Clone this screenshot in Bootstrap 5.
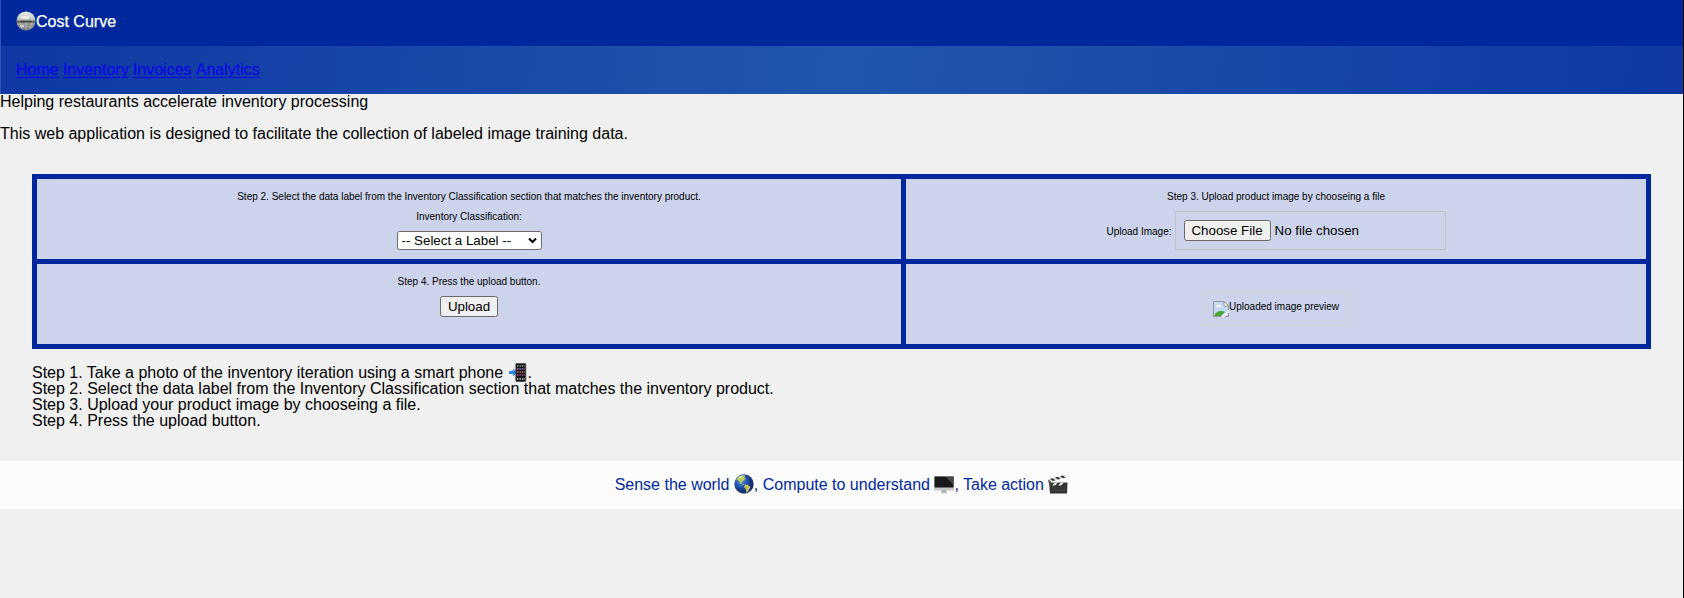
<!DOCTYPE html>
<html lang="en">
<head>
<meta charset="utf-8">
<meta name="viewport" content="width=device-width, initial-scale=1">
<title>Cost Curve</title>
<link href="https://cdn.jsdelivr.net/npm/bootstrap@5.3.0/dist/css/bootstrap.min.css" rel="stylesheet">
<style>
  body { font: 16px/16px "Liberation Sans", Arial, sans-serif; color: #000; background: #f0f0f0; border-right: 1px solid #000; min-height: 598px; }
  .site-head { background: #00289c; color: #fff; height: 46px; padding: 11px 16px 0; line-height: 20px; }
  .site-head span { padding-top: 1px; -webkit-text-stroke: .25px #fff; }
  .site-nav { height: 48px; padding: 16px 16px 0; background: linear-gradient(100deg, #1037a2 0%, #2256ae 50%, #1037a2 100%); gap: 4.2px; }
  .site-head, .site-nav { border-left: 1px solid #3055ae; padding-left: 15px; }
  .site-nav a { color: #00e; text-decoration: underline; text-underline-offset: 2px; text-decoration-thickness: 1px; }
  .page-main { padding: 32px 32px 0; }
  .workflow { display: grid; grid-template-columns: 864px 1fr; grid-template-rows: 80px 80px; gap: 5px; padding: 5px; background: #00289c; height: 175px; }
  .step { background: #ccd3eb; font-size: 10px; line-height: 10px; padding-top: 13px; }
  .class-label { margin-top: 10px; }
  .native { font-size: 13.333px; color: #000; border: 1px solid #6b6b6b; border-radius: 2.5px; background: #efefef; line-height: 15px; white-space: nowrap; }
  .label-select { width: 145px; height: 19px; background: #fff; margin-top: 9px; padding: 0 4px 0 4px; }
  .btn-upload { width: 58px; height: 21px; padding: 2px 0; margin-top: 9px; }
  .file-row { margin-top: 9px; }
  .file-row label { padding-top: 2px; }
  .file-box { width: 271px; height: 39px; border: 1px solid #c2c3c8; padding: 8px; font-size: 13.333px; margin-left: 3px; }
  .btn-choose { width: 87px; height: 21px; padding: 2px 0; text-align: center; margin-right: 4px; }
  .preview { width: 144px; height: 34px; border: 1px solid #d3d5d6; padding: 8px; margin-top: 15px; white-space: nowrap; }
  .preview span { padding-top: 1px; }
  .site-foot { background: #fcfcfc; color: #00289c; height: 48px; margin-top: 32px; }
  .site-foot svg { margin-bottom: 2px; }
  svg { display: block; flex: none; }
</style>
</head>
<body>
<header class="site-head d-flex">
  <svg width="20" height="20" viewBox="0 0 20 20">
    <defs><linearGradient id="mirror" x1="0" y1="0" x2="0" y2="1"><stop offset="0" stop-color="#e9eeee"/><stop offset=".4" stop-color="#bdc2bd"/><stop offset=".52" stop-color="#5e605b"/><stop offset=".66" stop-color="#92928c"/><stop offset="1" stop-color="#777b7d"/></linearGradient></defs>
    <circle cx="10" cy="10" r="9.6" fill="url(#mirror)"/>
    <path d="M2 6h16M1 9h18M1 13h18M3 16h14M10 1v18M6 2q-4 8 0 16M14 2q4 8 0 16" fill="none" stroke="#fff" stroke-width=".6" opacity=".45"/>
    <path d="M6 5h7v3H5zM4 14h4v2H5z" fill="#fff" opacity=".55"/>
    <path d="M4 10.500h12" stroke="#42443f" stroke-width="1.3"/>
  </svg><span>Cost Curve</span>
</header>
<nav class="site-nav d-flex">
  <a href="#">Home</a><a href="#">Inventory</a><a href="#">Invoices</a><a href="#">Analytics</a>
</nav>
<p class="mb-3">Helping restaurants accelerate inventory processing</p>
<p class="mb-0">This web application is designed to facilitate the collection of labeled image training data.</p>

<main class="page-main">
  <div class="workflow">
    <section class="step d-flex flex-column align-items-center">
      <div>Step 2. Select the data label from the Inventory Classification section that matches the inventory product.</div>
      <label class="class-label">Inventory Classification:</label>
      <div class="native label-select d-flex align-items-center justify-content-between">
        <span>-- Select a Label --</span>
        <svg width="9" height="7" viewBox="0 0 9 7"><path d="M1 1.5l3.5 3.5L8 1.5" fill="none" stroke="#000" stroke-width="2"/></svg>
      </div>
    </section>
    <section class="step d-flex flex-column align-items-center">
      <div>Step 3. Upload product image by chooseing a file</div>
      <div class="file-row d-flex align-items-center"><label>Upload Image:</label>
        <div class="file-box d-flex align-items-center"><span class="native btn-choose">Choose File</span><span>No file chosen</span></div>
      </div>
    </section>
    <section class="step d-flex flex-column align-items-center">
      <div>Step 4. Press the upload button.</div>
      <button class="native btn-upload">Upload</button>
    </section>
    <section class="step d-flex flex-column align-items-center">
      <div class="preview d-flex">
        <svg width="16" height="16" viewBox="0 0 16 16">
          <path d="M0 0h11l5 5v5l-6 6H0z" fill="#c4d9f5"/>
          <path d="M3 6q0-2 2-2 3-1 3 2z" fill="#fff"/>
          <path d="M1 15q2-5 7-5 3 0 4 1l-4 4z" fill="#4ba633"/>
          <path d="M.5 16V.5H11L15.500 5v4M0 15.500h9M12 15.500h3.500V12" fill="none" stroke="#969696"/>
          <path d="M11 .5V5h4.500z" fill="#fff" stroke="#969696"/>
          <path d="M8 16l8-7v2l-5 5z" fill="#f4f6fb"/>
        </svg><span>Uploaded image preview</span>
      </div>
    </section>
  </div>
  <div class="instructions mt-3">
    <div class="d-flex"><span>Step 1. Take a photo of the inventory iteration using a smart phone&nbsp;</span>
      <svg width="20" height="16" viewBox="0 0 20 16" overflow="visible">
        <path d="M1 6h4V3.500l4 4-4 4V9H1z" fill="#2385ed"/>
        <rect x="7.800" y="-1.500" width="10" height="18" rx=".8" fill="#171419" stroke="#4d4b50" stroke-width=".8"/>
        <g stroke-width="1.400" stroke-dasharray="1.400 1.100"><path d="M9 1h8" stroke="#5ab47a"/><path d="M9 4h8" stroke="#9a7cce"/><path d="M9 7h8" stroke="#e67c48"/><path d="M9 10h8" stroke="#b95098"/><path d="M9 14h8" stroke="#c1d7c1"/></g>
      </svg><span>.</span></div>
    <div>Step 2. Select the data label from the Inventory Classification section that matches the inventory product.</div>
    <div>Step 3. Upload your product image by chooseing a file.</div>
    <div>Step 4. Press the upload button.</div>
  </div>
</main>
<footer class="site-foot d-flex justify-content-center align-items-center">
  <span>Sense the world&nbsp;</span>
  <svg width="20" height="20" viewBox="0 0 20 20">
    <defs><radialGradient id="ocean" cx=".35" cy=".35"><stop offset="0" stop-color="#5a8fd6"/><stop offset=".6" stop-color="#2458b5"/><stop offset="1" stop-color="#173174"/></radialGradient></defs>
    <circle cx="10" cy="10" r="9.700" fill="url(#ocean)"/>
    <path d="M3 4Q6 1 10 1l1.500 1L10 3.500l2 1-2.500 2L8.500 8 7 7.500 8.500 10l2 .5-1 .5-3-1.500-2-3L2.500 6z" fill="#bac95c"/>
    <path d="M11 10.500l3 .5 2.500 2-2 3.500-2 2.500-.8-4-1.700-2z" fill="#c4c45b"/>
    <path d="M4.500 3.500l3-1.500 1 .8-2.500 1.700z" fill="#e8edcc"/>
  </svg>
  <span>, Compute to understand&nbsp;</span>
  <svg width="20" height="20" viewBox="0 0 20 20">
    <path d="M8 15h4l.8 4H7.200z" fill="#a6a8ab"/><rect y="2" width="20" height="14.500" rx=".7" fill="#c4c6c9"/>
    <rect x=".5" y="2.500" width="19" height="11" fill="#19191b"/><path d="M12 3h7.500v8z" fill="#48484c"/><path d="M7 19h6" stroke="#d7d8da"/>
  </svg>
  <span>, Take action&nbsp;</span>
  <svg width="20" height="20" viewBox="0 0 20 20">
    <path d="M0 5.500L18 .5l.8 2.500L1.500 8z" fill="#e2e2e2"/><path d="M2 5l3 2 2.500-.7-3-2zM7 3.500l3 2 2.500-.7-3-2zM12 2.200l3 2 2.500-.7-3-2z" fill="#303030"/>
    <path d="M1 8.500h18.500L19 19.500H2z" fill="#333"/><path d="M4 11.500l3-3h3l-3 3zM10 11.500l3-3h3l-3 3z" fill="#eee"/><path d="M0 5.500l3 2v3H1z" fill="#555"/><path d="M4 14h13M4 16.500h13" stroke="#555" stroke-width=".6"/>
  </svg>
</footer>
<script src="https://cdn.jsdelivr.net/npm/bootstrap@5.3.0/dist/js/bootstrap.bundle.min.js"></script>
</body>
</html>
